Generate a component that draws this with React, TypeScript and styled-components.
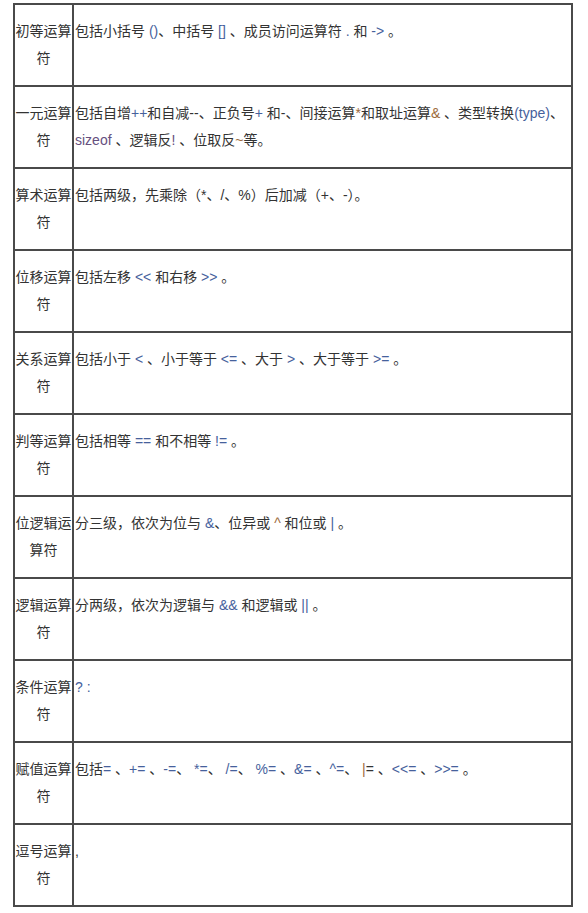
import React from 'react';
import styled, { createGlobalStyle } from 'styled-components';

const GlobalStyle = createGlobalStyle`
  html, body {
    margin: 0;
    padding: 0;
    background: #ffffff;
  }
  body {
    font-family: "Liberation Sans", "Noto Sans CJK SC", sans-serif;
    color: #333333;
  }
`;

type Tone = 'blue' | 'orange' | 'purple';

const toneColor: Record<Tone, string> = {
  blue: '#46619c',
  orange: '#9c6a3a',
  purple: '#66507e',
};

const Page = styled.div`
  padding: 3px 15px 0 13px;
`;

const Table = styled.table`
  width: 560px;
  border-collapse: collapse;
  table-layout: fixed;
  font-size: 14px;
  border: 2px solid #4a4a4a;
`;

const Row = styled.tr`
  height: 82px;
`;

const Label = styled.td`
  width: 57px;
  border: 2px solid #4a4a4a;
  padding: 13px 0 12px 0;
  vertical-align: top;
  text-align: center;
  line-height: 27px;
  word-break: break-all;
`;

const Content = styled.td`
  border: 2px solid #4a4a4a;
  padding: 13px 0 12px 1px;
  vertical-align: top;
  text-align: left;
  line-height: 27px;
`;

const Op = styled.span<{ $tone?: Tone }>`
  color: ${({ $tone }) => toneColor[$tone ?? 'blue']};
`;

export default function App() {
  return (
    <Page>
      <GlobalStyle />
      <Table>
        <tbody>
          <Row>
            <Label>初等运算符</Label>
            <Content>
              包括小括号 <Op>()</Op>、中括号 <Op>[]</Op> 、成员访问运算符 <Op>.</Op> 和 <Op>-&gt;</Op> 。
            </Content>
          </Row>
          <Row>
            <Label>一元运算符</Label>
            <Content>
              包括自增<Op>++</Op>和自减--、正负号<Op>+</Op> 和-、间接运算<Op $tone="orange">*</Op>和取址运算<Op $tone="orange">&amp;</Op> 、类型转换<Op>(type)</Op>、<Op $tone="purple">sizeof</Op> 、逻辑反<Op $tone="purple">!</Op> 、位取反<Op $tone="orange">~</Op>等。
            </Content>
          </Row>
          <Row>
            <Label>算术运算符</Label>
            <Content>包括两级，先乘除（*、/、%）后加减（+、-）。</Content>
          </Row>
          <Row>
            <Label>位移运算符</Label>
            <Content>
              包括左移 <Op>&lt;&lt;</Op> 和右移 <Op>&gt;&gt;</Op> 。
            </Content>
          </Row>
          <Row>
            <Label>关系运算符</Label>
            <Content>
              包括小于 <Op>&lt;</Op> 、小于等于 <Op>&lt;=</Op> 、大于 <Op>&gt;</Op> 、大于等于 <Op>&gt;=</Op> 。
            </Content>
          </Row>
          <Row>
            <Label>判等运算符</Label>
            <Content>
              包括相等 <Op>==</Op> 和不相等 <Op>!=</Op> 。
            </Content>
          </Row>
          <Row>
            <Label>位逻辑运算符</Label>
            <Content>
              分三级，依次为位与 <Op>&amp;</Op>、位异或 <Op $tone="orange">^</Op> 和位或 <Op>|</Op> 。
            </Content>
          </Row>
          <Row>
            <Label>逻辑运算符</Label>
            <Content>
              分两级，依次为逻辑与 <Op>&amp;&amp;</Op> 和逻辑或 <Op>||</Op> 。
            </Content>
          </Row>
          <Row>
            <Label>条件运算符</Label>
            <Content>
              <Op>? :</Op>
            </Content>
          </Row>
          <Row>
            <Label>赋值运算符</Label>
            <Content>
              包括<Op>=</Op> 、<Op>+=</Op> 、<Op>-=</Op>、 <Op>*=</Op>、 <Op>/=</Op>、 <Op>%=</Op> 、<Op>&amp;=</Op> 、<Op>^=</Op>、 <Op $tone="orange">|</Op>= 、<Op>&lt;&lt;=</Op> 、<Op>&gt;&gt;=</Op> 。
            </Content>
          </Row>
          <Row>
            <Label>逗号运算符</Label>
            <Content>,</Content>
          </Row>
        </tbody>
      </Table>
    </Page>
  );
}
